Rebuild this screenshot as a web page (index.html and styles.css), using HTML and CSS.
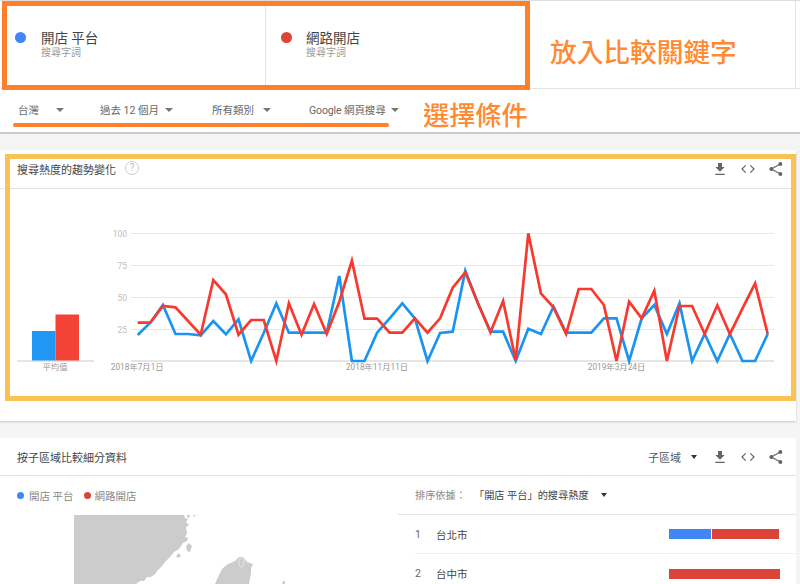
FILE: index.html
```html
<!DOCTYPE html>
<html lang="zh-Hant">
<head>
<meta charset="utf-8">
<title>Google 搜尋趨勢比較</title>
<link rel="stylesheet" href="styles.css">
</head>
<body>
<div class="page">
  <header class="compare">
    <div class="term">
      <span class="dot dot-blue"></span>
      <div class="term-text"><div class="term-name">開店 平台</div><div class="term-sub">搜尋字詞</div></div>
    </div>
    <div class="term">
      <span class="dot dot-red"></span>
      <div class="term-text"><div class="term-name">網路開店</div><div class="term-sub">搜尋字詞</div></div>
    </div>
    <div class="term-add"></div>
  </header>

  <nav class="filters">
    <div class="filter f1"><span>台灣</span><i class="caret"></i></div>
    <div class="filter f2"><span>過去 12 個月</span><i class="caret"></i></div>
    <div class="filter f3"><span>所有類別</span><i class="caret"></i></div>
    <div class="filter f4"><span>Google 網頁搜尋</span><i class="caret"></i></div>
  </nav>

  <section class="card card-trend">
    <div class="card-head">
      <div class="card-title">搜尋熱度的趨勢變化<span class="help">?</span></div>
      <div class="tools">
        <svg class="tool" viewBox="0 0 24 24"><path d="M19 9h-4V3H9v6H5l7 7 7-7zM5 19v2h14v-2H5z"/></svg>
        <svg class="tool" viewBox="0 0 24 24"><path class="thin" d="M8.5 6.5L3 12l5.500 5.500M15.500 6.500L21 12l-5.500 5.500"/></svg>
        <svg class="tool" viewBox="0 0 24 24"><circle cx="18.500" cy="4.500" r="3"/><circle cx="5" cy="12" r="3"/><circle cx="18.500" cy="19.500" r="3"/><path class="link" d="M18.500 4.500L5 12l13.500 7.500"/></svg>
      </div>
    </div>
    <svg class="chart" viewBox="0 189 796 232">
      <g class="grid">
        <line x1="131" x2="774" y1="233.500" y2="233.500"/>
        <line x1="131" x2="774" y1="265.500" y2="265.500"/>
        <line x1="131" x2="774" y1="297.500" y2="297.500"/>
        <line x1="131" x2="774" y1="329.500" y2="329.500"/>
      </g>
      <line class="base" x1="131" x2="774" y1="361" y2="361"/>
      <line class="base" x1="17" x2="94" y1="361" y2="361"/>
      <rect class="bar-blue" x="32" y="331" width="23.500" height="29.500"/>
      <rect class="bar-red" x="55.500" y="314.500" width="23.500" height="46"/>
      <g class="axis">
        <text x="127" y="236.500" text-anchor="end">100</text>
        <text x="127" y="268.500" text-anchor="end">75</text>
        <text x="127" y="300.500" text-anchor="end">50</text>
        <text x="127" y="332.500" text-anchor="end">25</text>
      </g>
      <g class="dates">
        <text class="avg" x="55" y="370" text-anchor="middle">平均值</text>
        <text x="137.200" y="370" text-anchor="middle">2018年7月1日</text>
        <text x="377" y="370" text-anchor="middle">2018年11月11日</text>
        <text x="616.500" y="370" text-anchor="middle">2019年3月24日</text>
      </g>
      <polyline class="line-blue" points="137.7,335 150.3,322.7 162.9,305 175.5,334 188.1,334 200.7,335.3 213.3,321 225.9,334.3 238.5,319.3 251.1,361 263.7,333 276.3,303.5 288.9,332.7 301.5,332.7 314.1,332.7 326.7,332.7 339.3,276 351.9,361 364.5,361 377.1,332.7 389.7,318.3 402.3,303.3 414.9,318.3 427.5,361 440.1,333 452.7,331.7 465.3,270.7 477.9,303 490.5,331.7 503.1,331.7 515.7,361 528.3,328.7 540.9,334 553.5,306.7 566.1,332.7 578.7,332.7 591.3,332.7 603.9,318.3 616.5,318.3 629.1,361 641.7,318.3 654.3,305 666.9,334 679.5,303.3 692.1,361 704.7,334 717.3,361 729.9,334 742.500,361 755.1,361 767.7,334"/>
      <polyline class="line-red" points="137.7,322.7 150.3,322.7 162.9,306 175.5,307.3 188.1,321 200.7,334.7 213.3,280 225.9,294.3 238.5,334.7 251.1,320 263.7,320 276.3,361 288.9,303.3 301.5,334.7 314.1,304 326.7,334 339.3,301.7 351.9,260.7 364.5,318.7 377.1,318.7 389.7,332.7 402.3,332.7 414.9,318.3 427.5,332.7 440.1,318.3 452.7,287.7 465.3,272.3 477.9,303.3 490.5,332.3 503.1,301 515.7,360 528.3,233.3 540.9,293.3 553.5,307.3 566.1,334 578.7,289 591.3,289 603.9,305 616.5,361 629.1,301.7 641.7,318.3 654.3,290.7 666.9,361 679.5,306 692.1,306 704.7,334 717.3,305.3 729.9,334 742.5,308.3 755.1,283.3 767.7,334"/>
    </svg>
  </section>

  <section class="card card-region">
    <div class="card-head region-head">
      <div class="card-title">按子區域比較細分資料</div>
      <div class="tools">
        <div class="subregion"><span>子區域</span><i class="caret caret-dark"></i></div>
        <svg class="tool" viewBox="0 0 24 24"><path d="M19 9h-4V3H9v6H5l7 7 7-7zM5 19v2h14v-2H5z"/></svg>
        <svg class="tool" viewBox="0 0 24 24"><path class="thin" d="M8.5 6.5L3 12l5.500 5.500M15.500 6.500L21 12l-5.500 5.500"/></svg>
        <svg class="tool" viewBox="0 0 24 24"><circle cx="18.500" cy="4.500" r="3"/><circle cx="5" cy="12" r="3"/><circle cx="18.500" cy="19.500" r="3"/><path class="link" d="M18.500 4.500L5 12l13.500 7.500"/></svg>
      </div>
    </div>
    <div class="region-body">
      <div class="region-map">
        <div class="legend">
          <span class="mini mini-blue"></span><span class="legend-label">開店 平台</span>
          <span class="mini mini-red"></span><span class="legend-label">網路開店</span>
        </div>
        <svg class="map" viewBox="0 515 398 69">
          <path class="land" d="M74 515H184L185 518 188 519 186 522 189 525 186 527 187 533 185 537 188 538 187 541 183 543 179 549 174 552 170 557 165 562 162 566 158 570 155 574 151 577 147 577 144 581 140 581 136 584H74Z"/>
          <path class="land" d="M215 584L219 575 222 569 228 564 235 561 239 557 243 557 247 562 253 564 251 568 251 573 250 578 249 584Z"/>
          <path class="land" d="M187 515H190L189 518 187 517ZM193 515H196L194 517ZM186 546L189 543 192 546 190 552 187 551ZM176 556L179 553 181 556 178 558ZM283 581H285V584H282Z"/>
          <ellipse class="metro" cx="241.500" cy="562.500" rx="2.500" ry="4.500"/>
        </svg>
      </div>
      <div class="region-list">
        <div class="sort"><span class="sort-label">排序依據：</span><span class="sort-value">「開店 平台」的搜尋熱度</span><i class="caret caret-dark"></i></div>
        <div class="row row-first">
          <span class="rank">1</span><span class="city">台北市</span>
          <div class="stack"><span class="seg seg-blue"></span><span class="seg seg-red"></span></div>
        </div>
        <div class="row">
          <span class="rank">2</span><span class="city">台中市</span>
          <div class="stack stack-full"><span class="seg seg-red"></span></div>
        </div>
      </div>
    </div>
  </section>

  <div class="note note-box"></div>
  <div class="note note-line"></div>
  <div class="note note-frame"></div>
  <div class="note note-text note-keywords">放入比較關鍵字</div>
  <div class="note note-text note-conditions">選擇條件</div>
</div>
</body>
</html>
```

FILE: styles.css
```css
* { box-sizing: border-box; }
html, body { margin: 0; padding: 0; }
body {
  width: 800px;
  height: 584px;
  overflow: hidden;
  background: #f5f5f5;
  font-family: Roboto, "Noto Sans CJK TC", sans-serif;
  color: #333;
}
.page { position: relative; width: 800px; height: 584px; overflow: hidden; }

/* compare bar */
.compare {
  display: grid;
  grid-template-columns: 266px 264px 266px 4px;
  height: 89px;
  background: #fff;
  border-top: 1px solid #ddd;
  border-bottom: 1px solid #e4e4e4;
}
.term {
  display: flex;
  align-items: flex-start;
  gap: 15px;
  padding: 29px 0 0 15px;
  border-right: 1px solid #e4e4e4;
}
.term + .term { border-right: 0; gap: 14px; }
.term-add { border-right: 1px solid #e4e4e4; }
.dot { width: 11px; height: 11px; border-radius: 50%; margin-top: 2px; flex: none; }
.dot-blue { background: #4285f4; }
.dot-red { background: #db4437; }
.term-name { font-size: 13.500px; line-height: 16px; color: #444; }
.term-sub { font-size: 10px; line-height: 14px; color: #999; }

/* filters */
.filters {
  display: grid;
  grid-template-columns: 82px 112px 97px 92px;
  align-items: center;
  height: 45px;
  padding: 0 0 2px 18px;
  background: #fff;
  border-bottom: 2px solid #ccc;
  font-size: 10.500px;
  color: #666;
}
.filter { display: flex; align-items: center; }
.f1 .caret { margin-left: 17px; }
.f2 .caret { margin-left: 6px; }
.f3 .caret { margin-left: 9px; }
.f4 { letter-spacing: -.1px; }
.f4 .caret { margin-left: 5px; }
.caret {
  display: block;
  width: 0;
  height: 0;
  border-left: 4px solid transparent;
  border-right: 4px solid transparent;
  border-top: 4.500px solid #757575;
}
.caret-dark { border-top-color: #333; }

/* cards */
.card {
  width: 796px;
  background: #fff;
  box-shadow: 0 1px 2px rgba(0, 0, 0, .2);
}
.card-trend { height: 271px; margin-top: 16px; }
.card-region { height: 146px; margin-top: 17px; box-shadow: none; }
.card-head {
  display: flex;
  justify-content: space-between;
  align-items: center;
  height: 39px;
  padding: 0 12px 1px 17px;
  border-bottom: 1px solid #e4e4e4;
}
.region-head { height: 38px; padding-top: 1px; padding-bottom: 0; }
.card-title { display: flex; align-items: center; font-size: 11px; color: #444; }
.help {
  width: 14px;
  height: 14px;
  margin: -2px 0 0 9px;
  border: 1.500px solid #ccc;
  border-radius: 50%;
  font-size: 10px;
  line-height: 11px;
  text-align: center;
  color: #bbb;
}
.tools { display: flex; align-items: center; gap: 12px; }
.tool { display: block; width: 16px; height: 16px; fill: #666; }
.tool .thin { fill: none; stroke: #666; stroke-width: 1.800; }
.tool .link { fill: none; stroke: #666; stroke-width: 1.800; }

/* trend chart */
.chart { display: block; width: 796px; height: 232px; }
.grid line { stroke: #e8e8e8; stroke-width: 1; }
.base { stroke: #ccc; stroke-width: 1; }
.bar-blue { fill: #2196f3; }
.bar-red { fill: #f44336; }
.axis text { font-size: 8.500px; fill: #bdbdbd; }
.dates text { font-size: 8.300px; fill: #999; }
.line-blue, .line-red { fill: none; stroke-width: 2.700; stroke-linejoin: miter; }
.line-blue { stroke: #1a94f2; }
.line-red { stroke: #f7392e; }

/* regions */
.subregion { display: flex; align-items: center; gap: 10px; margin-right: 3px; font-size: 11px; color: #555; }
.subregion .caret { border-left-width: 3.500px; border-right-width: 3.500px; }
.region-body { display: grid; grid-template-columns: 398px 398px; height: 108px; }
.region-map { display: flex; flex-direction: column; }
.legend {
  display: flex;
  align-items: center;
  height: 39px;
  padding: 0 0 0 17px;
  font-size: 10.500px;
  color: #888;
}
.mini { width: 7px; height: 7px; border-radius: 50%; flex: none; margin-right: 5px; }
.mini-blue { background: #4285f4; }
.mini-red { background: #db4437; margin-left: 10px; margin-right: 4px; }
.map { display: block; width: 398px; height: 69px; }
.land { fill: #ccc; }
.metro { fill: none; stroke: #e8e8e8; stroke-width: 1; }
.sort {
  display: flex;
  align-items: center;
  height: 39px;
  padding: 0 0 1px 17px;
  border-bottom: 1px solid #e4e4e4;
  font-size: 10.200px;
}
.sort-label { width: 59px; color: #888; }
.sort-value { color: #444; margin-right: 12px; }
.sort .caret { border-left-width: 3.500px; border-right-width: 3.500px; }
.row {
  display: flex;
  align-items: center;
  height: 39px;
  margin-left: 17px;
  font-size: 10.500px;
  color: #444;
}
.row-first { border-bottom: 1px solid #eee; }
.rank { width: 21px; color: #666; }
.city { width: 233px; }
.stack { display: flex; gap: 1px; width: 110px; height: 10px; }
.stack-full { width: 111px; }
.seg { display: block; height: 10px; }
.seg-blue { width: 42px; background: #4285f4; }
.seg-red { flex: 1; background: #db4437; }

/* annotations drawn over the screenshot */
.note { position: absolute; }
.note-box { left: 2px; top: 1px; width: 528px; height: 89px; border: 5px solid #ff7f2a; }
.note-line { left: 13px; top: 123px; width: 376px; height: 4px; border-radius: 2px; background: #ff7f2a; }
.note-frame { left: 5px; top: 154px; width: 791px; height: 247px; border: 5px solid #f9c254; }
.note-text {
  color: #ff8a33;
  font-family: "Noto Sans CJK TC", sans-serif;
  font-weight: 500;
  white-space: nowrap;
  line-height: 30px;
}
.note-keywords { left: 550px; top: 36px; font-size: 26.700px; }
.note-conditions { left: 423px; top: 99px; font-size: 26.200px; }
```
